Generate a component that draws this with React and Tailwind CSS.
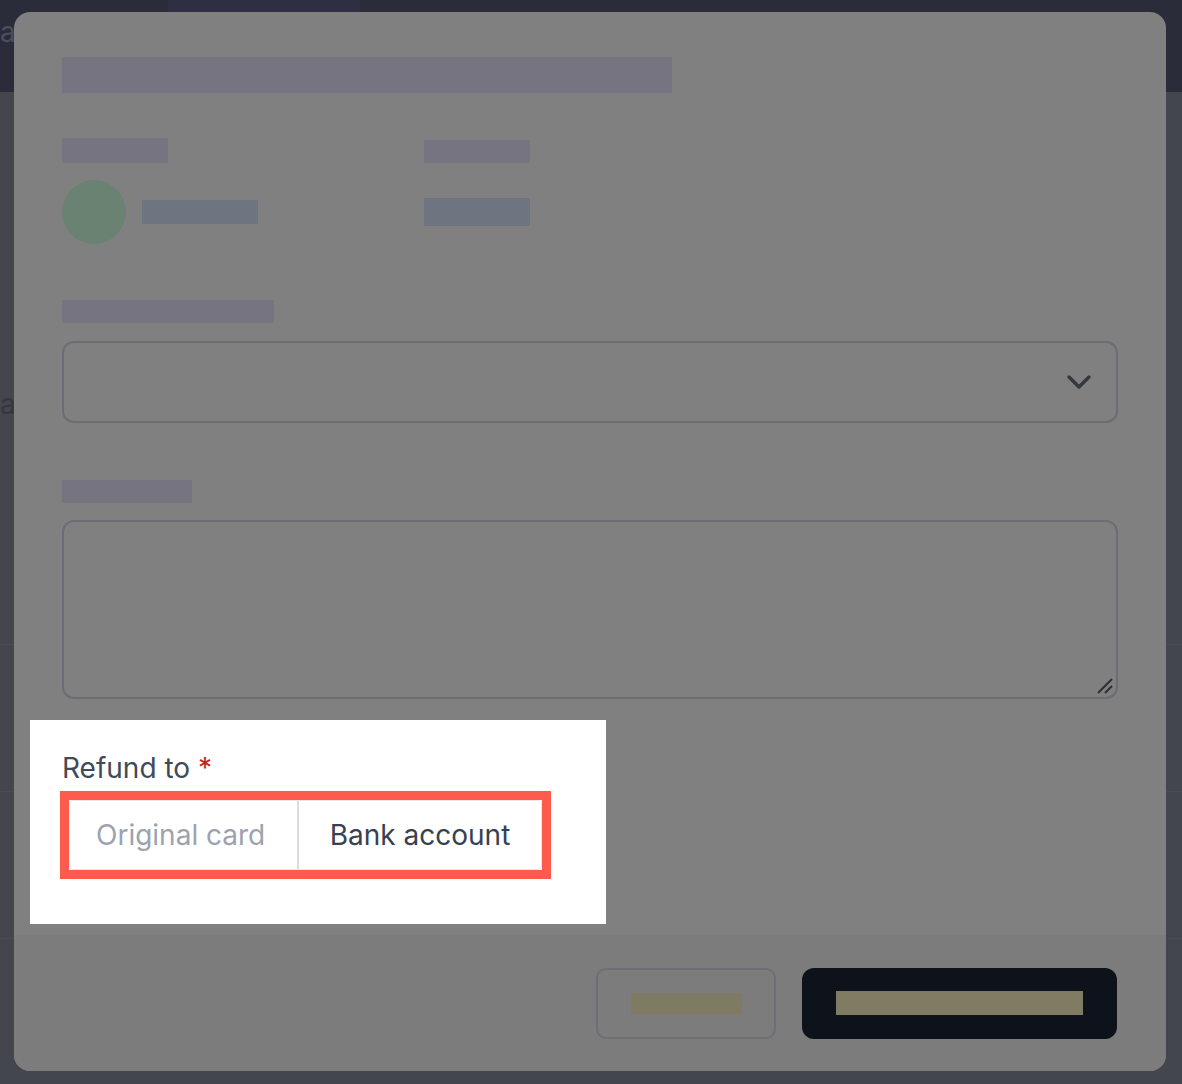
import React from 'react';
import { ChevronDown } from 'lucide-react';

const font = { fontFamily: 'Inter, "Noto Sans", sans-serif' };

const Bar = ({ className }) => <div className={className} />;

const App = () => {
  return (
    <div className="relative w-full h-[1084px] overflow-hidden bg-[#44464d]" style={font}>
      {/* page behind the dialog */}
      <div className="h-[92px] bg-[#2a2c3a] flex">
        <div className="w-[168px] pt-[12px] text-[28px] text-[#4b4e5e] leading-[40px]">a</div>
        <div className="w-[192px] bg-[#2e2f45]" />
      </div>
      <div className="pt-[292px] text-[28px] leading-[40px] text-[#35373e]">a</div>
      <div className="mt-[220px] border-t border-[#4a4c53]" />
      <div className="mt-[146px] border-t border-[#4a4c53]" />
      <div className="mt-[146px] border-t border-[#4a4c53]" />

      {/* dialog */}
      <div className="absolute left-[14px] top-[12px] w-[1152px] h-[1059px] rounded-[16px] bg-[#808080] flex flex-col overflow-hidden">
        <div className="flex-1 px-[48px] pt-[45px]">
          <Bar className="w-[610px] h-[36px] bg-[#777482]" />

          <div className="mt-[45px] flex">
            <div className="w-[362px]">
              <Bar className="w-[106px] h-[25px] bg-[#777482]" />
              <div className="mt-[17px] flex items-center gap-[16px]">
                <div className="w-[64px] h-[64px] rounded-full bg-[#6a8272]" />
                <Bar className="w-[116px] h-[24px] bg-[#6e7580]" />
              </div>
            </div>
            <div className="pt-[2px]">
              <Bar className="w-[106px] h-[23px] bg-[#777482]" />
              <Bar className="mt-[35px] w-[106px] h-[28px] bg-[#6e7580]" />
            </div>
          </div>

          <Bar className="mt-[56px] w-[212px] h-[23px] bg-[#777482]" />
          <div className="mt-[18px] h-[82px] rounded-[12px] border-2 border-[#6c6c74] flex items-center justify-end pr-[17px]">
            <ChevronDown size={40} strokeWidth={2.1} className="text-[#36383f]" />
          </div>

          <Bar className="mt-[57px] w-[130px] h-[23px] bg-[#777482]" />
          <div className="relative mt-[17px] h-[179px] rounded-[12px] border-2 border-[#6c6c74]">
            <svg className="absolute right-[2px] bottom-[2px]" width="18" height="18" viewBox="0 0 18 18">
              <path d="M2 16 L16 2 M9 16 L16 9" stroke="#2f3035" strokeWidth="2" />
            </svg>
          </div>

          <div className="mt-[21px] -ml-[32px] w-[576px] h-[204px] bg-white pl-[32px] pt-[28px]">
            <div className="text-[28px] leading-[40px] text-[#414a58]">
              Refund to <span className="text-[#c81e24]">*</span>
            </div>
            <div className="mt-[3px] -ml-[2px] inline-flex border-[9px] border-[#ff5a4e]">
              <div className="flex h-[70px] bg-white border border-[#e5e7eb] rounded-[4px]">
                <div className="w-[229px] flex items-center pl-[26px] text-[28px] text-[#9ca3af] border-r-2 border-[#d9dce1]">
                  Original card
                </div>
                <div className="w-[242px] flex items-center justify-center text-[28px] text-[#374151]">
                  Bank account
                </div>
              </div>
            </div>
          </div>
        </div>

        <div className="h-[136px] bg-[#7c7c7c] flex items-center justify-end gap-[26px] pr-[49px]">
          <div className="w-[180px] h-[71px] rounded-[10px] border-2 border-[#6e6e76] flex items-center justify-center">
            <Bar className="w-[111px] h-[21px] bg-[#7f7b63]" />
          </div>
          <div className="w-[315px] h-[71px] rounded-[12px] bg-[#0e131b] flex items-center justify-center">
            <Bar className="w-[247px] h-[24px] bg-[#807c64]" />
          </div>
        </div>
      </div>
    </div>
  );
};

export default App;
